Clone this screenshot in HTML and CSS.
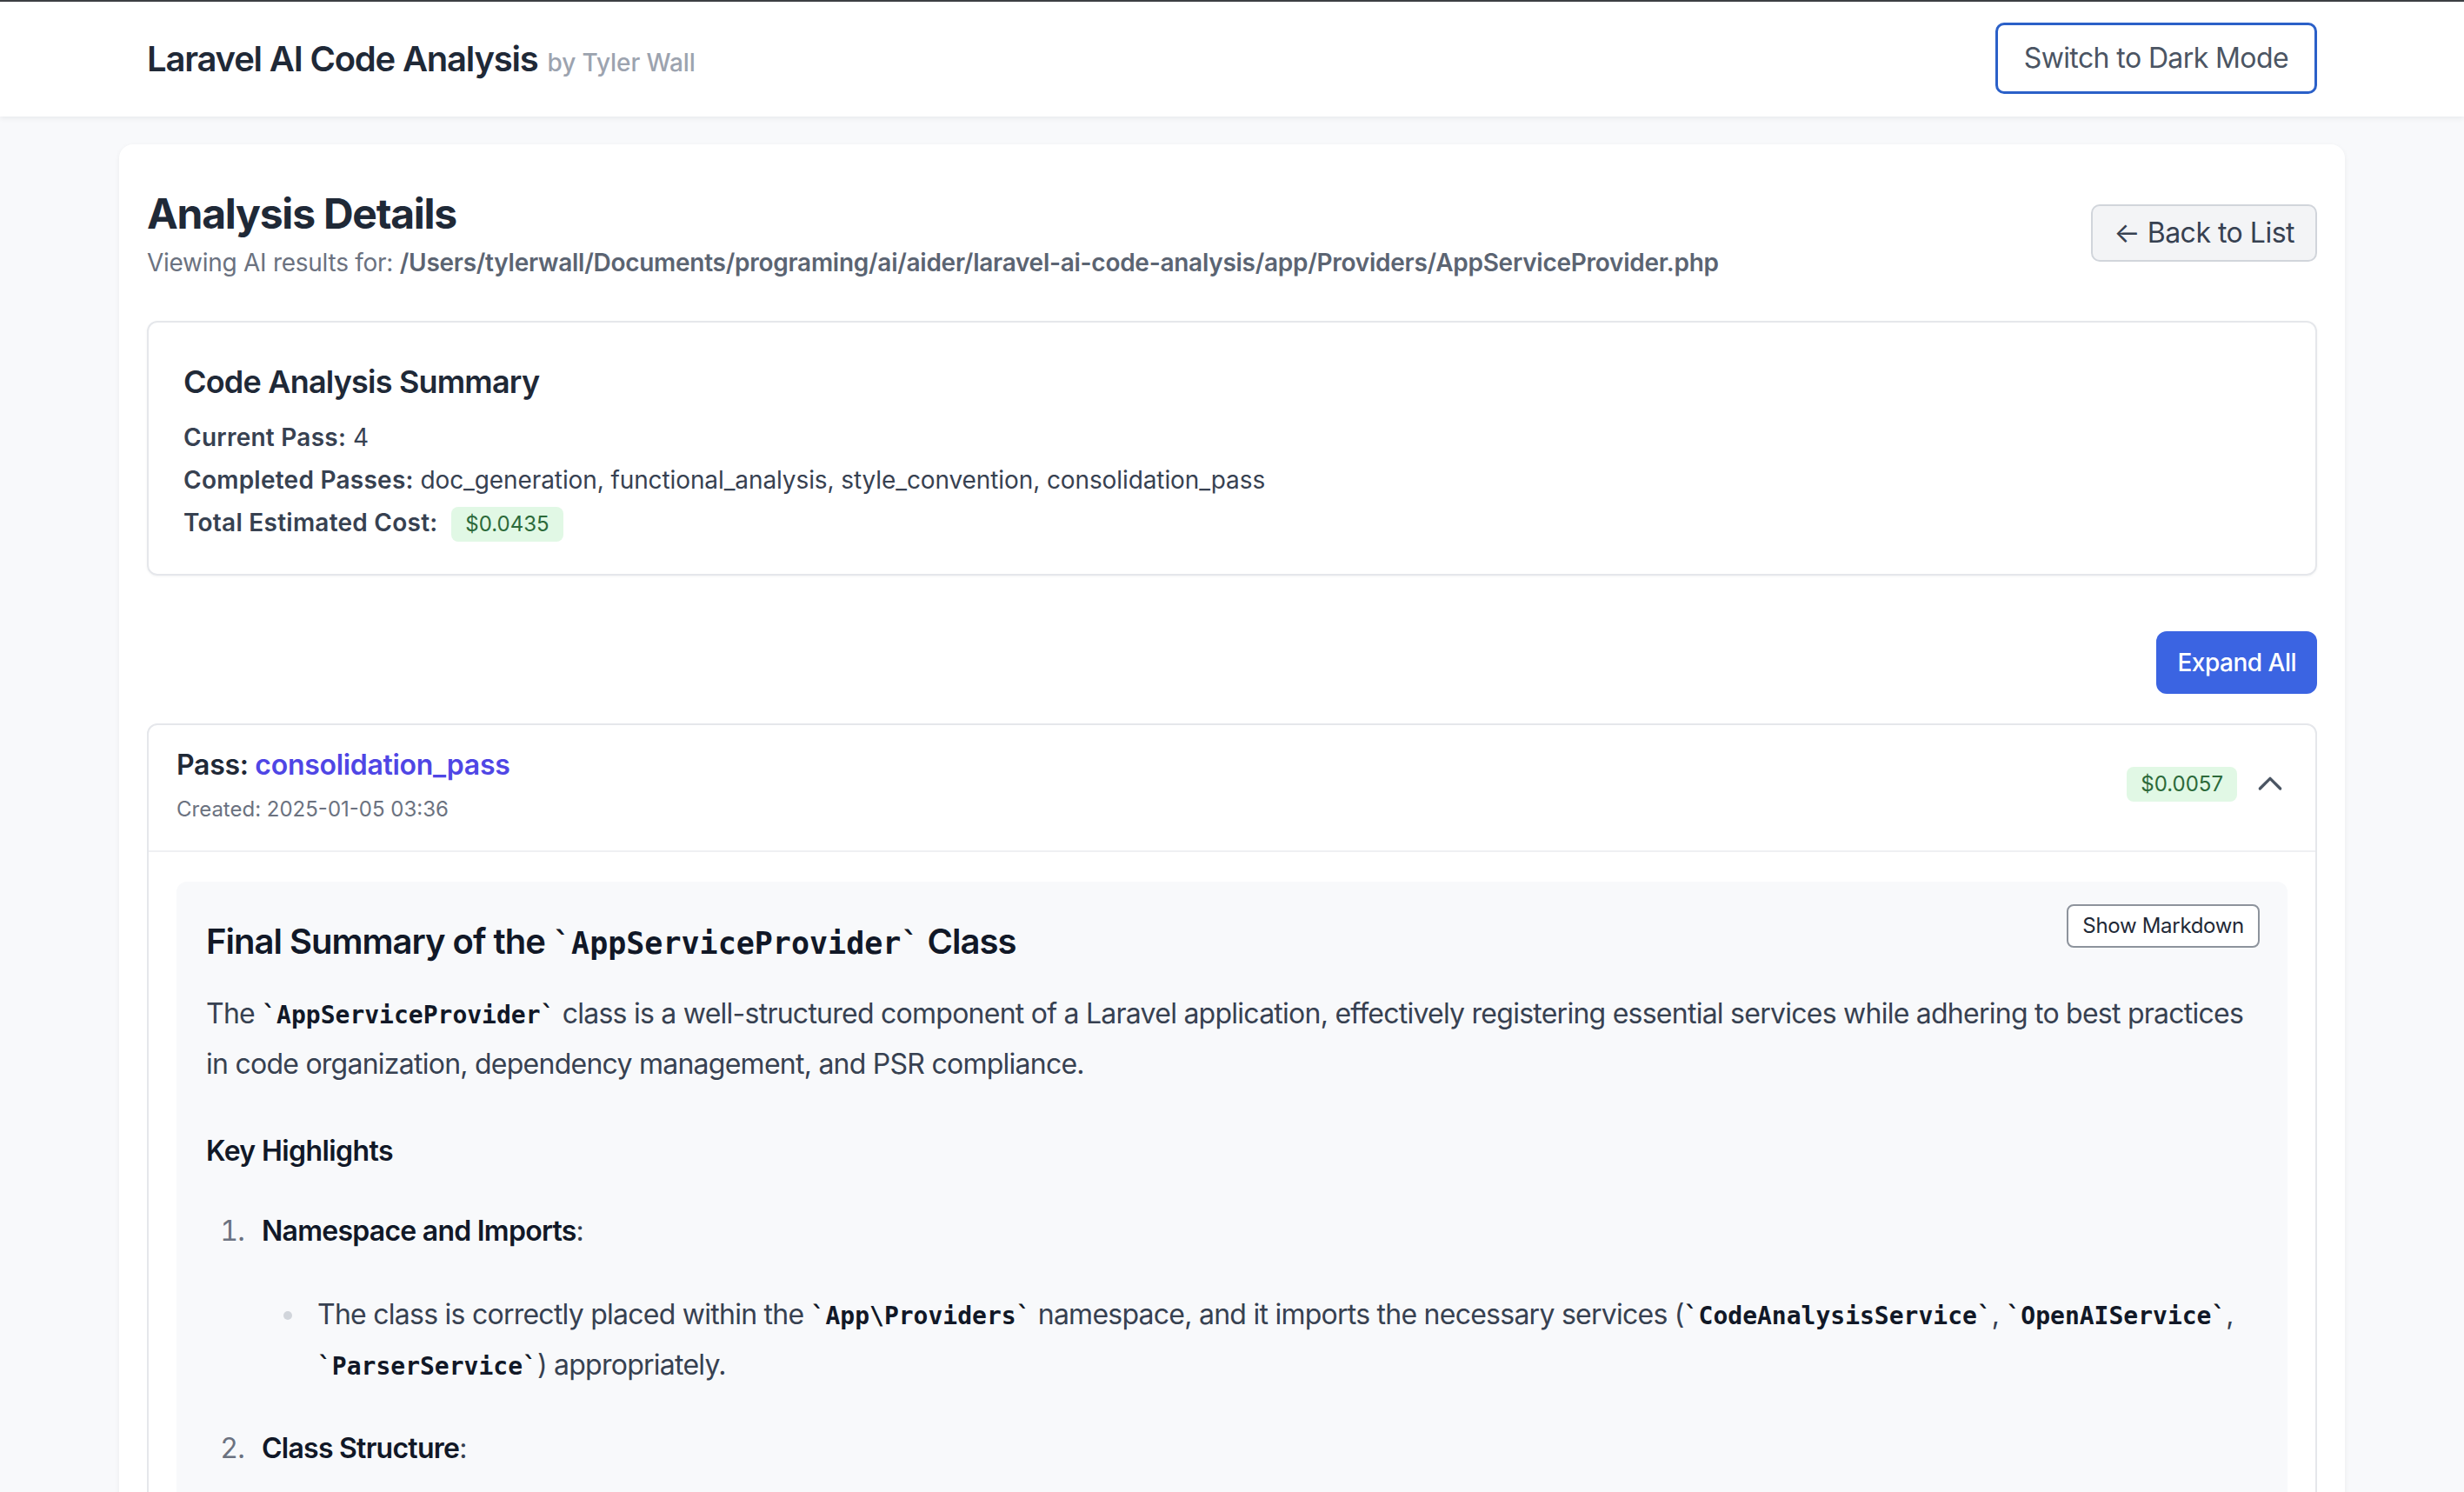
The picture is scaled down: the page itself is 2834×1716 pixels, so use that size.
FILE: index.html
```html
<!DOCTYPE html>
<html lang="en">
<head>
<meta charset="utf-8">
<title>Laravel AI Code Analysis</title>
<link rel="stylesheet" href="styles.css">
</head>
<body>
<header class="topbar">
  <div class="topbar-inner">
    <h1 class="brand">Laravel AI Code Analysis <span class="brand-by">by Tyler Wall</span></h1>
    <button class="btn-theme" type="button">Switch to Dark Mode</button>
  </div>
</header>
<main class="page">
  <section class="card">
    <div class="card-head">
      <div>
        <h2 class="page-title">Analysis Details</h2>
        <p class="page-sub">Viewing AI results for: <strong>/Users/tylerwall/Documents/programing/ai/aider/laravel-ai-code-analysis/app/Providers/AppServiceProvider.php</strong></p>
      </div>
      <a class="btn-back" href="#">← Back to List</a>
    </div>

    <div class="summary">
      <h3 class="summary-title">Code Analysis Summary</h3>
      <div class="summary-rows">
        <p><strong>Current Pass:</strong> 4</p>
        <p><strong>Completed Passes:</strong> doc_generation, functional_analysis, style_convention, consolidation_pass</p>
        <p><strong>Total Estimated Cost:</strong> <span class="badge badge-cost">$0.0435</span></p>
      </div>
    </div>

    <div class="toolbar">
      <button class="btn-primary" type="button">Expand All</button>
    </div>

    <article class="pass">
      <div class="pass-head">
        <div>
          <h4 class="pass-title">Pass: <span class="pass-name">consolidation_pass</span></h4>
          <p class="pass-date">Created: 2025-01-05 03:36</p>
        </div>
        <div class="pass-meta">
          <span class="badge">$0.0057</span>
          <svg class="chevron" viewBox="0 0 24 24" width="40" height="40" fill="none" stroke="currentColor" stroke-width="2" stroke-linecap="round" stroke-linejoin="round"><path d="M5 15l7-7 7 7"/></svg>
        </div>
      </div>
      <div class="pass-body">
        <div class="result">
          <button class="btn-md" type="button">Show Markdown</button>
          <div class="prose">
            <h3>Final Summary of the <code>AppServiceProvider</code> Class</h3>
            <p>The <code>AppServiceProvider</code> class is a well-structured component of a Laravel application, effectively registering essential services while adhering to best practices in code organization, dependency management, and PSR compliance.</p>
            <h4>Key Highlights</h4>
            <ol>
              <li>
                <p><strong>Namespace and Imports</strong>:</p>
                <ul>
                  <li><p>The class is correctly placed within the <code>App\Providers</code> namespace, and it imports the necessary services (<code>CodeAnalysisService</code>, <code>OpenAIService</code>, <code>ParserService</code>) appropriately.</p></li>
                </ul>
              </li>
              <li>
                <p><strong>Class Structure</strong>:</p>
                <ul>
                  <li><p>The class extends Laravel's base <code>ServiceProvider</code> and implements the <code>register</code> and <code>boot</code> methods.</p></li>
                </ul>
              </li>
            </ol>
          </div>
        </div>
      </div>
    </article>
  </section>
</main>
</body>
</html>
```

FILE: styles.css
```css
html, body {
  margin: 0;
  padding: 0;
}

body {
  background: #f8f9fb;
  border-top: 2px solid #3c3f43;
  font-family: Inter, "Noto Sans", "Liberation Sans", sans-serif;
  color: #1f2937;
}

/* ---------- Top bar ---------- */
.topbar {
  background: #ffffff;
  box-shadow: 0 2px 6px rgba(17, 24, 39, 0.07);
  position: relative;
}

.topbar-inner {
  max-width: 2560px;
  margin: 0 auto;
  box-sizing: border-box;
  padding: 24px 32px 26px;
  display: flex;
  align-items: center;
  justify-content: space-between;
}

.brand {
  margin: 6px 0 0;
  font-size: 40px;
  line-height: 56px;
  font-weight: 600;
  color: #1f2937;
  letter-spacing: -1.2px;
}

.brand-by {
  font-size: 28px;
  font-weight: 500;
  color: #9ca3af;
  margin-left: 2px;
  letter-spacing: -0.1px;
}

.btn-theme {
  font-family: inherit;
  font-size: 32px;
  line-height: 48px;
  letter-spacing: -0.6px;
  padding: 14px 30px;
  border: 3px solid #2b60c8;
  border-radius: 10px;
  background: #ffffff;
  color: #4b5563;
}

/* ---------- Page / card ---------- */
.page {
  max-width: 2560px;
  margin: 0 auto;
  padding-top: 32px;
}

.card {
  background: #ffffff;
  border-radius: 16px;
  box-shadow: 0 2px 6px rgba(17, 24, 39, 0.06);
  padding: 48px 32px;
}

.card-head {
  display: flex;
  align-items: center;
  justify-content: space-between;
  margin-bottom: 47px;
}

.page-title {
  margin: 0;
  font-size: 48px;
  line-height: 64px;
  font-weight: 700;
  color: #1f2937;
  letter-spacing: -1.25px;
}

.page-sub {
  margin: 4px 0 0;
  font-size: 28px;
  line-height: 40px;
  color: #6b7280;
  letter-spacing: -0.27px;
}

.page-sub strong {
  font-weight: 600;
  color: #5b6472;
}

.btn-back {
  display: inline-block;
  background: #f3f4f6;
  border: 2px solid #d1d5db;
  border-radius: 10px;
  padding: 7px 24px;
  font-size: 32px;
  line-height: 48px;
  letter-spacing: -0.5px;
  color: #374151;
  text-decoration: none;
}

/* ---------- Summary ---------- */
.summary {
  border: 2px solid #e5e7eb;
  border-radius: 12px;
  padding: 40px 40px 37px;
  margin-bottom: 64px;
  box-shadow: 0 1px 3px rgba(17, 24, 39, 0.05);
}

.summary-title {
  margin: 0 0 16px;
  font-size: 36px;
  line-height: 56px;
  font-weight: 600;
  color: #1f2937;
  letter-spacing: -0.8px;
}

.summary-rows p {
  margin: 0 0 9px;
  font-size: 28px;
  line-height: 40px;
  color: #374151;
  letter-spacing: -0.1px;
}

.summary-rows p:last-child {
  margin-bottom: 0;
}

.summary-rows strong {
  font-weight: 600;
  color: #374151;
  letter-spacing: 0.25px;
}

.badge {
  display: inline-block;
  vertical-align: middle;
  background: #e1f8e5;
  color: #2c6a3a;
  font-size: 24px;
  line-height: 32px;
  letter-spacing: 0;
  padding: 4px 16px;
  border-radius: 8px;
}

.badge-cost {
  margin-left: 8px;
}

/* ---------- Toolbar ---------- */
.toolbar {
  display: flex;
  justify-content: flex-end;
  margin-bottom: 34px;
}

.btn-primary {
  font-family: inherit;
  font-size: 28px;
  line-height: 40px;
  font-weight: 500;
  letter-spacing: -0.5px;
  padding: 16px 24px;
  border: 0;
  border-radius: 12px;
  background: #3b64e2;
  color: #ffffff;
}

/* ---------- Pass card ---------- */
.pass {
  border: 2px solid #e5e7eb;
  border-radius: 12px;
}

.pass-head {
  display: flex;
  align-items: center;
  justify-content: space-between;
  padding: 22px 32px 31px;
  border-bottom: 2px solid #eff0f3;
}

.pass-title {
  margin: 0;
  font-size: 32px;
  line-height: 48px;
  font-weight: 600;
  color: #1f2937;
  letter-spacing: -0.3px;
}

.pass-name {
  color: #4f46e5;
}

.pass-date {
  margin: 11px 0 0;
  font-size: 24px;
  line-height: 32px;
  color: #6b7280;
}

.pass-meta {
  display: flex;
  align-items: center;
  gap: 18px;
}

.chevron {
  color: #4b5563;
  display: block;
}

.pass-body {
  padding: 34px 32px 32px;
}

.result {
  position: relative;
  background: #f8f9fb;
  border-radius: 12px;
  padding: 37px 34px 40px;
}

.btn-md {
  position: absolute;
  top: 26px;
  right: 32px;
  font-family: inherit;
  font-size: 24px;
  line-height: 32px;
  letter-spacing: -0.3px;
  padding: 7px 16px;
  background: #ffffff;
  border: 2px solid #8d939c;
  border-radius: 8px;
  color: #1f2937;
}

/* ---------- Prose ---------- */
.prose {
  color: #374151;
  font-size: 32px;
  line-height: 56px;
  letter-spacing: -0.75px;
}

.prose h3 {
  margin: 0 0 21px;
  font-size: 40px;
  line-height: 64px;
  font-weight: 600;
  color: #111827;
  letter-spacing: -1px;
}

.prose h4 {
  margin: 0 0 40px;
  font-size: 32px;
  line-height: 48px;
  font-weight: 600;
  color: #111827;
  letter-spacing: -0.6px;
}

.prose p {
  margin: 0;
}

.prose > p {
  margin-bottom: 48px;
}

.prose strong {
  font-weight: 600;
  color: #111827;
}

.prose code {
  font-family: "DejaVu Sans Mono", "Liberation Mono", monospace;
  font-size: 0.875em;
  font-weight: 700;
  letter-spacing: 0;
  color: #111827;
}

.prose code::before,
.prose code::after {
  content: "`";
}

.prose ol,
.prose ul {
  margin: 0;
  padding-left: 52px;
}

.prose ol {
  list-style-type: decimal;
}

.prose ul {
  list-style-type: disc;
}

.prose li {
  padding-left: 12px;
}

.prose li + li {
  margin-top: 38px;
}

.prose li > ul {
  margin-top: 40px;
}

.prose ol > li::marker {
  color: #6b7280;
  font-weight: 400;
}

.prose ul > li::marker {
  color: #d1d5db;
}
```
